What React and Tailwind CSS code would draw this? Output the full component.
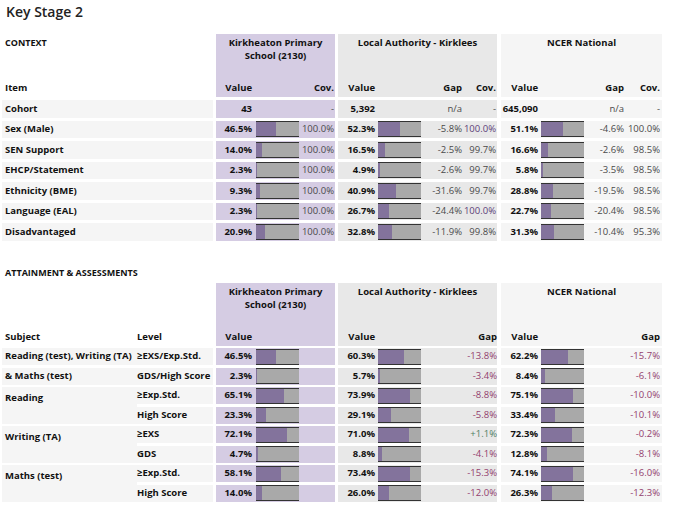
import React from "react";

// Key Stage 2 comparison tables: school vs local authority vs national
const ctxRows = [
  { label: "Cohort", s: ["43", null, "-"], la: ["5,392", null, "n/a", "-"], nat: ["645,090", null, "n/a", "-"] },
  { label: "Sex (Male)", s: ["46.5%", 46.5, "100.0%"], la: ["52.3%", 52.3, "-5.8%", "100.0%"], nat: ["51.1%", 51.1, "-4.6%", "100.0%"] },
  { label: "SEN Support", s: ["14.0%", 14.0, "100.0%"], la: ["16.5%", 16.5, "-2.5%", "99.7%"], nat: ["16.6%", 16.6, "-2.6%", "98.5%"] },
  { label: "EHCP/Statement", s: ["2.3%", 2.3, "100.0%"], la: ["4.9%", 4.9, "-2.6%", "99.7%"], nat: ["5.8%", 5.8, "-3.5%", "98.5%"] },
  { label: "Ethnicity (BME)", s: ["9.3%", 9.3, "100.0%"], la: ["40.9%", 40.9, "-31.6%", "99.7%"], nat: ["28.8%", 28.8, "-19.5%", "98.5%"] },
  { label: "Language (EAL)", s: ["2.3%", 2.3, "100.0%"], la: ["26.7%", 26.7, "-24.4%", "100.0%"], nat: ["22.7%", 22.7, "-20.4%", "98.5%"] },
  { label: "Disadvantaged", s: ["20.9%", 20.9, "100.0%"], la: ["32.8%", 32.8, "-11.9%", "99.8%"], nat: ["31.3%", 31.3, "-10.4%", "95.3%"] },
];

const attGroups = [
  {
    subject: ["Reading (test), Writing (TA)", "& Maths (test)"],
    split: true,
    rows: [
      { level: "≥EXS/Exp.Std.", s: 46.5, la: [60.3, "-13.8%"], nat: [62.2, "-15.7%"] },
      { level: "GDS/High Score", s: 2.3, la: [5.7, "-3.4%"], nat: [8.4, "-6.1%"] },
    ],
  },
  {
    subject: ["Reading"],
    rows: [
      { level: "≥Exp.Std.", s: 65.1, la: [73.9, "-8.8%"], nat: [75.1, "-10.0%"] },
      { level: "High Score", s: 23.3, la: [29.1, "-5.8%"], nat: [33.4, "-10.1%"] },
    ],
  },
  {
    subject: ["Writing (TA)"],
    rows: [
      { level: "≥EXS", s: 72.1, la: [71.0, "+1.1%"], nat: [72.3, "-0.2%"] },
      { level: "GDS", s: 4.7, la: [8.8, "-4.1%"], nat: [12.8, "-8.1%"] },
    ],
  },
  {
    subject: ["Maths (test)"],
    rows: [
      { level: "≥Exp.Std.", s: 58.1, la: [73.4, "-15.3%"], nat: [74.1, "-16.0%"] },
      { level: "High Score", s: 14.0, la: [26.0, "-12.0%"], nat: [26.3, "-12.3%"] },
    ],
  },
];

function Bar({ pct }) {
  if (pct == null) return <div className="w-[43px] ml-[3px]" />;
  return (
    <div className="ml-[3px] w-[43px] h-[16px] bg-[#a9a9a9] border-y border-[#333]">
      <div className="h-full bg-[#83739c]" style={{ width: pct + "%" }} />
    </div>
  );
}

const num = "text-[9.5px] font-normal text-[#4a4a4a]";
const bold = "text-[9.5px] font-bold text-[#111] whitespace-nowrap";

function GroupHead({ title, cols, bg }) {
  return (
    <div className={`h-[63px] flex flex-col ${bg}`}>
      <div className={`pt-[2px] text-center leading-[13px] ${bold}`}>{title}</div>
      <div className={`mt-auto h-[17px] flex items-center ${bold}`}>{cols}</div>
    </div>
  );
}

function fmt(v) {
  return v.toFixed(1) + "%";
}

function gapColor(g) {
  return g.startsWith("+") ? "text-[#4f8064]" : "text-[#93406d]";
}

export default function App() {
  return (
    <div className="w-[678px] h-[525px] bg-white pl-[2px] font-['Open_Sans',sans-serif] overflow-hidden">
      <h1 className="pt-[2px] pl-[4px] leading-[20px] text-[14px] font-semibold text-[#222]">Key Stage 2</h1>

      {/* Context */}
      <div className="mt-[12px] grid grid-cols-[211px_122px_162px_165px] gap-y-[3px]">
        <div className={`h-[63px] flex flex-col pl-[3px] ${bold}`}>
          <div className="pt-[2px] leading-[13px] text-[9px]">CONTEXT</div>
          <div className="mt-auto h-[17px] flex items-center">Item</div>
        </div>
        <div className="ml-[3px]">
          <GroupHead
            bg="bg-[#d5cce3]"
            title={<>Kirkheaton Primary<br />School (2130)</>}
            cols={<>
              <div className="w-[37px] text-right pr-[1px]">Value</div>
              <div className="flex-1 text-right pr-[1px]">Cov.</div>
            </>}
          />
        </div>
        <div className="ml-[3px]">
          <GroupHead
            bg="bg-[#e8e8e8]"
            title="Local Authority - Kirklees"
            cols={<>
              <div className="w-[37px] text-right">Value</div>
              <div className="w-[46px]" />
              <div className="w-[41px] text-right">Gap</div>
              <div className="flex-1 text-right pr-[1px]">Cov.</div>
            </>}
          />
        </div>
        <div className="ml-[4px]">
          <GroupHead
            bg="bg-[#f5f5f5]"
            title="NCER National"
            cols={<>
              <div className="w-[37px] text-right">Value</div>
              <div className="w-[46px]" />
              <div className="w-[40px] text-right">Gap</div>
              <div className="flex-1 text-right pr-[2px]">Cov.</div>
            </>}
          />
        </div>

        {ctxRows.map((r) => (
          <React.Fragment key={r.label}>
            <div className={`h-[17.5px] bg-[#f5f5f5] pl-[3px] flex items-center ${bold}`}>{r.label}</div>
            <div className="ml-[3px] h-[17.5px] bg-[#d5cce3] flex items-center">
              <div className={`w-[37px] text-right pr-[1px] ${bold}`}>{r.s[0]}</div>
              <Bar pct={r.s[1]} />
              <div className={`flex-1 text-right pr-[1px] ${num}`}>{r.s[2]}</div>
            </div>
            <div className="ml-[3px] h-[17.5px] bg-[#e8e8e8] flex items-center">
              <div className={`w-[37px] text-right ${bold}`}>{r.la[0]}</div>
              <Bar pct={r.la[1]} />
              <div className={`w-[41px] text-right ${num}`}>{r.la[2]}</div>
              <div className={`flex-1 text-right pr-[1px] ${num} ${r.la[3] === "100.0%" ? "!text-[#5d3f78]" : ""}`}>{r.la[3]}</div>
            </div>
            <div className="ml-[4px] h-[17.5px] bg-[#f5f5f5] flex items-center">
              <div className={`w-[37px] text-right ${bold}`}>{r.nat[0]}</div>
              <Bar pct={r.nat[1]} />
              <div className={`w-[40px] text-right ${num}`}>{r.nat[2]}</div>
              <div className={`flex-1 text-right pr-[2px] ${num}`}>{r.nat[3]}</div>
            </div>
          </React.Fragment>
        ))}
      </div>

      {/* Attainment */}
      <div className="mt-[25px] pl-[3px] leading-[14px] text-[9px] font-bold text-[#111]">ATTAINMENT &amp; ASSESSMENTS</div>
      <div className="mt-[3px] grid grid-cols-[135px_76px_122px_162px_165px] gap-y-[2.5px]">
        <div className={`col-span-2 h-[63px] flex flex-col ${bold}`}>
          <div className="mt-auto h-[17px] flex items-center">
            <div className="w-[135px] pl-[3px]">Subject</div>
            <div>Level</div>
          </div>
        </div>
        <div className="ml-[3px]">
          <GroupHead
            bg="bg-[#d5cce3]"
            title={<>Kirkheaton Primary<br />School (2130)</>}
            cols={<div className="w-[37px] text-right pr-[1px]">Value</div>}
          />
        </div>
        <div className="ml-[3px]">
          <GroupHead
            bg="bg-[#e8e8e8]"
            title="Local Authority - Kirklees"
            cols={<>
              <div className="w-[37px] text-right">Value</div>
              <div className="flex-1 text-right">Gap</div>
            </>}
          />
        </div>
        <div className="ml-[4px]">
          <GroupHead
            bg="bg-[#f5f5f5]"
            title="NCER National"
            cols={<>
              <div className="w-[37px] text-right">Value</div>
              <div className="flex-1 text-right pr-[2px]">Gap</div>
            </>}
          />
        </div>

        {attGroups.map((g) =>
          g.rows.map((r, i) => (
            <React.Fragment key={g.subject[0] + r.level}>
              {g.split ? (
                <div className={`col-start-1 h-[17px] bg-[#f5f5f5] pl-[3px] flex items-center ${bold}`}>{g.subject[i]}</div>
              ) : (
                i === 0 && (
                  <div className={`col-start-1 row-span-2 bg-[#f5f5f5] pl-[3px] pt-[4px] leading-[13px] ${bold}`}>{g.subject[0]}</div>
                )
              )}
              <div className={`col-start-2 h-[17px] bg-[#f5f5f5] flex items-center ${bold}`}>{r.level}</div>
              <div className="ml-[3px] h-[17px] bg-[#d5cce3] flex items-center">
                <div className={`w-[37px] text-right pr-[1px] ${bold}`}>{fmt(r.s)}</div>
                <Bar pct={r.s} />
              </div>
              <div className="ml-[3px] h-[17px] bg-[#e8e8e8] flex items-center">
                <div className={`w-[37px] text-right ${bold}`}>{fmt(r.la[0])}</div>
                <Bar pct={r.la[0]} />
                <div className={`flex-1 text-right text-[9.5px] ${gapColor(r.la[1])}`}>{r.la[1]}</div>
              </div>
              <div className="ml-[4px] h-[17px] bg-[#f5f5f5] flex items-center">
                <div className={`w-[37px] text-right ${bold}`}>{fmt(r.nat[0])}</div>
                <Bar pct={r.nat[0]} />
                <div className={`flex-1 text-right pr-[2px] text-[9.5px] ${gapColor(r.nat[1])}`}>{r.nat[1]}</div>
              </div>
            </React.Fragment>
          ))
        )}
      </div>
    </div>
  );
}
